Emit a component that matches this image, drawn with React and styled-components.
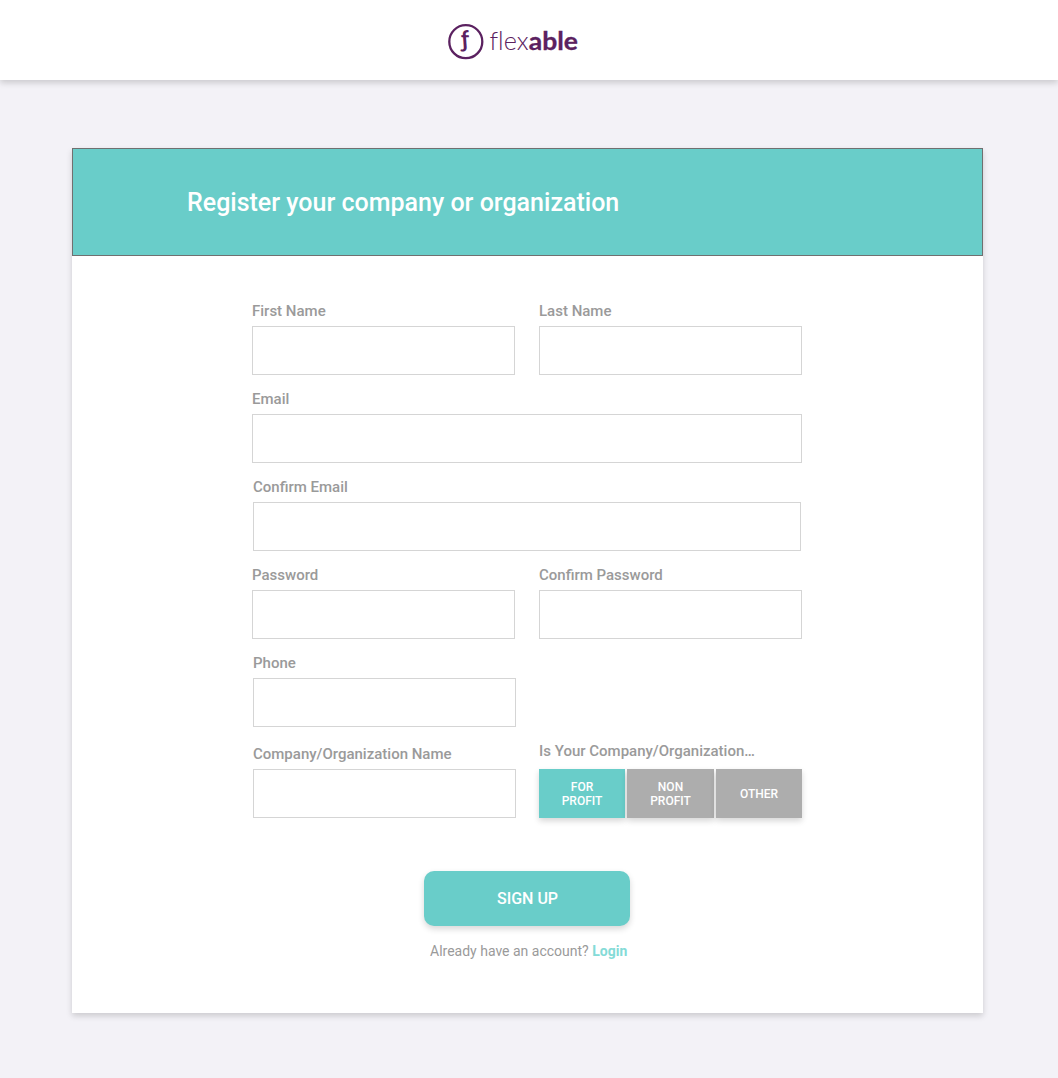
import React, { useState } from "react";
import styled, { createGlobalStyle } from "styled-components";

const teal = "#69cdc9";

const GlobalStyle = createGlobalStyle`
  *, *::before, *::after { box-sizing: border-box; }
  body {
    margin: 0;
    background: #f3f2f7;
    font-family: Roboto, "Liberation Sans", sans-serif;
  }
  button, input { font-family: inherit; }
`;

const Page = styled.div`
  min-height: 1078px;
  display: flex;
  flex-direction: column;
`;

const Header = styled.header`
  height: 80px;
  padding: 22px 0 0 446px;
  background: #fff;
  box-shadow: 0 3px 6px rgba(0, 0, 0, 0.16);
`;

const Logo = styled.svg`
  display: block;
  width: 136px;
  height: 40px;
  fill: #5b2160;
  font-family: Lato, sans-serif;
  font-variant-ligatures: none;
`;

const Card = styled.main`
  width: 911px;
  height: 865px;
  margin: 68px 0 0 72px;
  background: #fff;
  box-shadow: 0 3px 6px rgba(0, 0, 0, 0.16);
`;

const Banner = styled.div`
  height: 108px;
  display: flex;
  align-items: center;
  padding: 2px 0 0 114px;
  background: ${teal};
  border: 1px solid #707070;
`;

const Title = styled.h1`
  margin: 0;
  color: #fff;
  font-size: 25px;
  font-weight: 500;
  line-height: 32px;
`;

const Form = styled.form`
  width: 550px;
  margin: 46px 0 0 180px;
  display: flex;
  flex-direction: column;
`;

const Row = styled.div`
  display: flex;
  align-items: flex-end;
  gap: ${(p) => p.$gap ?? 24}px;
  margin-top: ${(p) => p.$top ?? 15}px;
  padding: 0 ${(p) => p.$end ?? 0}px 0 ${(p) => p.$start ?? 0}px;
`;

const Field = styled.div`
  width: ${(p) => (p.$wide ? "100%" : "263px")};
  display: flex;
  flex-direction: column;
  gap: ${(p) => p.$gap ?? 6}px;
`;

const Label = styled.label`
  color: #9a9a9a;
  font-size: 15px;
  font-weight: 500;
  line-height: 18px;
  white-space: nowrap;
`;

const Input = styled.input`
  width: 100%;
  height: 49px;
  padding: 0 12px;
  background: #fff;
  border: 1px solid #d5d5d5;
  border-radius: 0;
  outline: none;
`;

const Segments = styled.div`
  display: grid;
  grid-template-columns: 86px 87px 86px;
  gap: 2px;
  height: 49px;
`;

const Segment = styled.button`
  padding: 0 18px;
  border: 0;
  background: ${(p) => (p.$active ? teal : "#adadad")};
  box-shadow: 0 3px 6px rgba(0, 0, 0, 0.16);
  color: #fff;
  font-size: 12px;
  font-weight: 500;
  line-height: 14px;
`;

const Submit = styled.button`
  align-self: center;
  width: 206px;
  height: 55px;
  margin-top: 53px;
  padding: 0 0 0 1px;
  border: 0;
  border-radius: 10px;
  background: ${teal};
  box-shadow: 0 3px 6px rgba(0, 0, 0, 0.16);
  color: #fff;
  font-size: 16px;
  font-weight: 500;
`;

const Note = styled.p`
  margin: 16px 0 0 178px;
  color: #9a9a9a;
  font-size: 14px;
  line-height: 18px;
  white-space: nowrap;
`;

const Login = styled.a`
  color: #84dbd7;
  font-weight: 700;
  text-decoration: none;
`;

const TextField = ({ id, label, type = "text", wide }) => (
  <Field $wide={wide}>
    <Label htmlFor={id}>{label}</Label>
    <Input id={id} type={type} />
  </Field>
);

export default function App() {
  const [kind, setKind] = useState("For Profit");
  return (
    <Page>
      <GlobalStyle />
      <Header>
        <Logo viewBox="0 0 136 40" role="img" aria-label="flexable">
          <circle cx="19.8" cy="19.7" r="16.5" fill="none" stroke="#5b2160" strokeWidth="2.3" />
          <text transform="translate(15.8 25.4) skewX(4)" fontSize="23" fontWeight="700">ƒ</text>
          <text x="43.5" y="27.5" fontSize="24.5" fontWeight="300" textLength="39" lengthAdjust="spacingAndGlyphs">flex</text>
          <text x="82.8" y="27.5" fontSize="24" fontWeight="700" textLength="49.2" lengthAdjust="spacingAndGlyphs" stroke="#5b2160" strokeWidth="0.3">able</text>
        </Logo>
      </Header>
      <Card>
        <Banner>
          <Title>Register your company or organization</Title>
        </Banner>
        <Form onSubmit={(e) => e.preventDefault()}>
          <Row $top={0}>
            <TextField id="first" label="First Name" />
            <TextField id="last" label="Last Name" />
          </Row>
          <Row>
            <TextField id="email" label="Email" type="email" wide />
          </Row>
          <Row $start={1} $end={1}>
            <TextField id="email2" label="Confirm Email" type="email" wide />
          </Row>
          <Row>
            <TextField id="pass" label="Password" type="password" />
            <TextField id="pass2" label="Confirm Password" type="password" />
          </Row>
          <Row $start={1}>
            <TextField id="phone" label="Phone" type="tel" />
          </Row>
          <Row $start={1} $gap={23}>
            <TextField id="company" label="Company/Organization Name" />
            <Field $gap={9}>
              <Label as="span">Is Your Company/Organization…</Label>
              <Segments>
                {["For Profit", "Non Profit", "Other"].map((k) => (
                  <Segment key={k} type="button" $active={k === kind} onClick={() => setKind(k)}>
                    {k.toUpperCase()}
                  </Segment>
                ))}
              </Segments>
            </Field>
          </Row>
          <Submit type="submit">SIGN UP</Submit>
          <Note>
            Already have an account? <Login href="#login">Login</Login>
          </Note>
        </Form>
      </Card>
    </Page>
  );
}
